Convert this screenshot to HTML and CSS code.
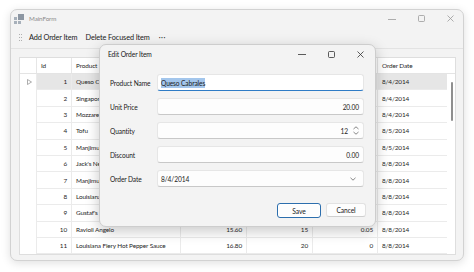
FILE: index.html
```html
<!DOCTYPE html>
<html>
<head>
<meta charset="utf-8">
<link rel="stylesheet" href="styles.css">
</head>
<body>
<div class="window">
  <div class="titlebar">
    <svg class="app-icon" width="10" height="10" viewBox="0 0 10 10">
      <rect x="0" y="3" width="3" height="3" fill="#a7b0ba"/>
      <rect x="0" y="7" width="3" height="3" fill="#a7b0ba"/>
      <rect x="4" y="0" width="6" height="6" fill="#8c96a2"/>
      <rect x="4" y="7" width="3" height="3" fill="#a7b0ba"/>
    </svg>
    <span class="title">MainForm</span>
    <div class="controls inactive">
      <svg width="8" height="8" viewBox="0 0 8 8"><line x1="0" y1="4.5" x2="8" y2="4.5" stroke="currentColor" stroke-width="0.8"/></svg>
      <svg width="7" height="7" viewBox="0 0 7 7"><rect x="0.5" y="0.5" width="6" height="6" rx="1" fill="none" stroke="currentColor" stroke-width="0.8"/></svg>
      <svg width="7" height="7" viewBox="0 0 7 7"><path d="M0.5 0.5L6.5 6.5M6.5 0.5L0.5 6.5" stroke="currentColor" stroke-width="0.8"/></svg>
    </div>
  </div>
  <div class="toolbar">
    <svg class="grip" width="3" height="7" viewBox="0 0 3 7">
      <rect x="0" y="0" width="1" height="1" fill="#b0b0b0"/><rect x="2" y="0" width="1" height="1" fill="#b0b0b0"/>
      <rect x="0" y="3" width="1" height="1" fill="#b0b0b0"/><rect x="2" y="3" width="1" height="1" fill="#b0b0b0"/>
      <rect x="0" y="6" width="1" height="1" fill="#b0b0b0"/><rect x="2" y="6" width="1" height="1" fill="#b0b0b0"/>
    </svg>
    <span class="tb-item">Add Order Item</span>
    <span class="tb-item">Delete Focused Item</span>
    <span class="tb-more">···</span>
  </div>
  <div class="content">
    <div class="grid">
      <div class="grid-row head">
        <div class="c ind"></div>
        <div class="c">Id</div>
        <div class="c">Product</div>
        <div class="c">Unit Price</div>
        <div class="c">Quantity</div>
        <div class="c">Discount</div>
        <div class="c">Order Date</div>
        <div class="c sc"></div>
      </div>
      <div class="grid-body">
        <div class="rows">
          <div class="grid-row sel"><div class="c ind"><svg width="5" height="6" viewBox="0 0 5 6"><path d="M0.5 0.5L4.5 3L0.5 5.5Z" fill="none" stroke="#8a8a8a" stroke-width="0.7"/></svg></div><div class="c r">1</div><div class="c">Queso Cabrales</div><div class="c r">20.00</div><div class="c r">12</div><div class="c r">0</div><div class="c">8/4/2014</div></div>
          <div class="grid-row"><div class="c ind"></div><div class="c r">2</div><div class="c">Singaporean Hokkien Fried Mee</div><div class="c r">9.80</div><div class="c r">10</div><div class="c r">0</div><div class="c">8/4/2014</div></div>
          <div class="grid-row"><div class="c ind"></div><div class="c r">3</div><div class="c">Mozzarella di Giovanni</div><div class="c r">34.80</div><div class="c r">5</div><div class="c r">0</div><div class="c">8/4/2014</div></div>
          <div class="grid-row"><div class="c ind"></div><div class="c r">4</div><div class="c">Tofu</div><div class="c r">18.60</div><div class="c r">9</div><div class="c r">0</div><div class="c">8/5/2014</div></div>
          <div class="grid-row"><div class="c ind"></div><div class="c r">5</div><div class="c">Manjimup Dried Apples</div><div class="c r">42.40</div><div class="c r">40</div><div class="c r">0</div><div class="c">8/5/2014</div></div>
          <div class="grid-row"><div class="c ind"></div><div class="c r">6</div><div class="c">Jack's New England Clam Chowder</div><div class="c r">7.70</div><div class="c r">10</div><div class="c r">0</div><div class="c">8/8/2014</div></div>
          <div class="grid-row"><div class="c ind"></div><div class="c r">7</div><div class="c">Manjimup Dried Apples</div><div class="c r">42.40</div><div class="c r">35</div><div class="c r">0.15</div><div class="c">8/8/2014</div></div>
          <div class="grid-row"><div class="c ind"></div><div class="c r">8</div><div class="c">Louisiana Fiery Hot Pepper Sauce</div><div class="c r">16.80</div><div class="c r">15</div><div class="c r">0.15</div><div class="c">8/8/2014</div></div>
          <div class="grid-row"><div class="c ind"></div><div class="c r">9</div><div class="c">Gustaf's Knäckebröd</div><div class="c r">16.80</div><div class="c r">6</div><div class="c r">0.05</div><div class="c">8/8/2014</div></div>
          <div class="grid-row"><div class="c ind"></div><div class="c r">10</div><div class="c">Ravioli Angelo</div><div class="c r">15.60</div><div class="c r">15</div><div class="c r">0.05</div><div class="c">8/8/2014</div></div>
          <div class="grid-row"><div class="c ind"></div><div class="c r">11</div><div class="c">Louisiana Fiery Hot Pepper Sauce</div><div class="c r">16.80</div><div class="c r">20</div><div class="c r">0</div><div class="c">8/8/2014</div></div>
        </div>
        <div class="vscroll"><div class="thumb"></div></div>
      </div>
    </div>
  </div>

  <div class="dialog">
    <div class="d-titlebar">
      <span class="d-title">Edit Order Item</span>
      <div class="controls d-controls">
        <svg width="8" height="8" viewBox="0 0 8 8"><line x1="0" y1="4.5" x2="8" y2="4.5" stroke="currentColor" stroke-width="0.8"/></svg>
        <svg width="7" height="7" viewBox="0 0 7 7"><rect x="0.5" y="0.5" width="6" height="6" rx="1" fill="none" stroke="currentColor" stroke-width="0.8"/></svg>
        <svg width="7" height="7" viewBox="0 0 7 7"><path d="M0.5 0.5L6.5 6.5M6.5 0.5L0.5 6.5" stroke="currentColor" stroke-width="0.8"/></svg>
      </div>
    </div>
    <div class="form">
      <label>Product Name</label>
      <div class="input focus"><span class="caret"></span><span class="selected">Queso Cabrales</span></div>
      <label>Unit Price</label>
      <div class="input num">20.00</div>
      <label>Quantity</label>
      <div class="input num"><span class="val">12</span>
        <svg class="spin" width="6" height="9" viewBox="0 0 6 9"><path d="M0.5 3L3 0.8L5.5 3M0.5 6L3 8.2L5.5 6" fill="none" stroke="#555" stroke-width="0.7"/></svg>
      </div>
      <label>Discount</label>
      <div class="input num">0.00</div>
      <label>Order Date</label>
      <div class="input date"><span class="val">8/4/2014</span>
        <svg class="drop" width="6" height="4" viewBox="0 0 6 4"><path d="M0.5 0.8L3 3.2L5.5 0.8" fill="none" stroke="#555" stroke-width="0.7"/></svg>
      </div>
    </div>
    <div class="buttons">
      <div class="btn default">Save</div>
      <div class="btn">Cancel</div>
    </div>
  </div>
</div>
</body>
</html>
```
FILE: styles.css
```css
* { box-sizing: border-box; }
html, body { margin: 0; }
body {
  width: 474px;
  height: 272px;
  overflow: hidden;
  background: #ffffff;
  padding: 9px 10px;
  font-family: Lato, "Noto Sans", sans-serif;
  font-size: 7.3px;
  letter-spacing: -0.1px;
  color: #1a1a1a;
}
.window {
  position: relative;
  width: 454px;
  height: 252px;
  border: 1px solid #d2d2d2;
  border-radius: 7px;
  background: #f3f3f3;
  box-shadow: 0 2px 10px rgba(0,0,0,0.13);
  display: flex;
  flex-direction: column;
}
.titlebar {
  height: 17px;
  display: flex;
  align-items: center;
  padding-left: 3px;
}
.app-icon { display: block; }
.title { margin-left: 5px; color: #8a8a8a; font-size: 6.3px; }
.controls {
  margin-left: auto;
  display: flex;
  align-items: center;
  gap: 22px;
  padding-right: 9px;
}
.controls svg { display: block; }
.controls.inactive { color: #9a9a9a; }
.toolbar {
  height: 22px;
  display: flex;
  align-items: center;
  padding-left: 8px;
  border-bottom: 1px solid #e3e3e3;
  color: #1a1a1a;
}
.grip { display: block; margin-right: 7px; }
.tb-item { margin-right: 8px; }
.tb-more { margin-left: 1px; letter-spacing: 0.5px; }
.content {
  flex: 1;
  padding: 8px 7px 0 8px;
}
.grid {
  border: 1px solid #dedede;
  background: #fff;
  color: #1f1f1f;
  font-size: 6.4px;
  letter-spacing: -0.12px;
}
.grid-row {
  display: grid;
  grid-template-columns: 17px 35px 109px 66px 66px 65px 69px;
  height: 16.4px;
}
.grid-row.head {
  grid-template-columns: 17px 35px 109px 66px 66px 65px 69px 10px;
  height: 16px;
  border-bottom: 1px solid #e4e4e4;
}
.c {
  display: flex;
  align-items: center;
  padding: 0 4px;
  white-space: nowrap;
  overflow: hidden;
  border-right: 1px solid #ebebeb;
  border-bottom: 1px solid #ebebeb;
}
.head .c { border-bottom: none; border-right-color: #e6e6e6; }
.c.r { justify-content: flex-end; }
.c.ind { border-bottom: none; padding: 0 0 0 7px; }
.c.sc { border-right: none; }
.grid-row .c:nth-child(7) { border-right: none; }
.sel .c:not(.ind) { background: #e6e6e6; }
.grid-body { display: flex; }
.rows { flex: none; }
.vscroll { width: 10px; position: relative; }
.thumb {
  position: absolute;
  left: 4px;
  top: 8px;
  width: 2px;
  height: 39px;
  border-radius: 1px;
  background: #8f8f8f;
}

.dialog {
  position: absolute;
  left: 88px;
  top: 34px;
  width: 277px;
  height: 183px;
  background: #f3f3f3;
  border: 1px solid #cdcdcd;
  border-radius: 7px;
  box-shadow: 0 4px 14px rgba(0,0,0,0.22);
  display: flex;
  flex-direction: column;
  font-size: 6.6px;
}
.d-titlebar {
  height: 18px;
  display: flex;
  align-items: center;
  padding-left: 8px;
}
.d-title { color: #1a1a1a; font-size: 6.7px; }
.d-controls { color: #333; padding-right: 11px; }
.form {
  display: grid;
  grid-template-columns: 47px 1fr;
  row-gap: 7px;
  padding: 11px 11px 0 10px;
}
.form label {
  display: flex;
  align-items: center;
  height: 17px;
  white-space: nowrap;
  color: #1a1a1a;
}
.input {
  height: 17px;
  background: #fdfdfd;
  border: 1px solid #e6e6e6;
  border-bottom-color: #c8c8c8;
  border-radius: 3px;
  display: flex;
  align-items: center;
  padding: 0 4px 0 3px;
  color: #1a1a1a;
}
.input.focus {
  background: #fff;
  border-bottom: 1.5px solid #2f7cc6;
}
.caret { width: 1px; height: 9px; background: #111; margin-right: -1px; }
.selected { background: #a3c6ec; padding: 1px 0; }
.input.num { justify-content: flex-end; }
.input .val { flex: 1; }
.input.num .val { text-align: right; }
.spin { margin-left: 5px; display: block; }
.drop { display: block; margin-right: 3px; }
.buttons {
  display: flex;
  justify-content: flex-end;
  gap: 5px;
  margin-top: 16px;
  padding-right: 9px;
}
.btn {
  width: 40px;
  height: 14px;
  display: flex;
  align-items: center;
  justify-content: center;
  background: #fdfdfd;
  border: 1px solid #e2e2e2;
  border-bottom-color: #cfcfcf;
  border-radius: 3px;
  color: #1a1a1a;
  font-size: 6.7px;
}
.btn.default {
  width: 44px;
  height: 15px;
  border: 1.5px solid #2c6ead;
  box-shadow: inset 0 0 0 1px #ffffff;
}
```
